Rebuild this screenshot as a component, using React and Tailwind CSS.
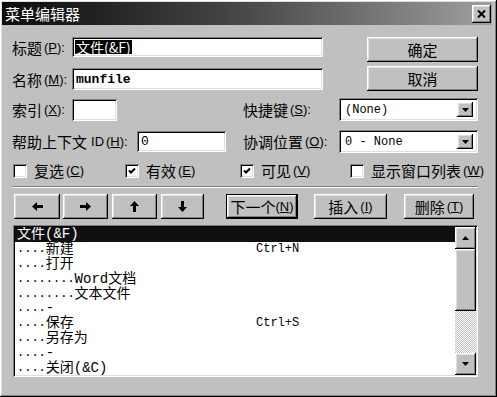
import React from 'react';

const raised = 'shadow-[inset_-1px_-1px_0_#000,inset_1px_1px_0_#fff,inset_-2px_-2px_0_#808080,inset_2px_2px_0_#dfdfdf]';
const sunken = 'shadow-[inset_1px_1px_0_#808080,inset_-1px_-1px_0_#fff,inset_2px_2px_0_#000,inset_-2px_-2px_0_#dfdfdf]';
const cjk = "font-['Noto_Sans_CJK_SC',sans-serif]";
const mono = "font-['Liberation_Mono','Noto_Sans_CJK_SC',monospace]";
const small = "text-[13px] font-['Liberation_Sans',sans-serif]";

const Lbl = ({ text, k, pre = '' }) => (
    <span className={`${cjk} text-[15px] leading-none text-black whitespace-nowrap flex items-center`}>
        {text}
        {pre && <span className={`${small} ml-[4px]`}>{pre}</span>}
        <span className={`${small} ml-[2px]`}>
            (<span className="underline">{k}</span>):
        </span>
    </span>
);

const Btn = ({ children, className = '' }) => (
    <div className={`bg-[#c0c0c0] ${raised} flex items-center justify-center ${cjk} text-[15px] leading-none text-black ${className}`}>
        {children}
    </div>
);

const Combo = ({ value }) => (
    <div className={`w-[139px] h-[23px] bg-white ${sunken} flex items-center pl-[6px] pr-[5px]`}>
        <span className={`flex-1 ${mono} text-[12px] leading-none`}>{value}</span>
        <div className={`w-[16px] h-[15px] bg-[#c0c0c0] ${raised} flex items-center justify-center`}>
            <svg width="7" height="4" viewBox="0 0 7 4"><path d="M0 0h7L3.5 4z" fill="#000" /></svg>
        </div>
    </div>
);

const Check = ({ checked, text, k, className = '' }) => (
    <div className={`flex items-center shrink-0 whitespace-nowrap ${className}`}>
        <div className={`w-[14px] h-[14px] shrink-0 bg-white ${sunken} flex items-center justify-center`}>
            {checked && (
                <svg width="8" height="8" viewBox="0 0 8 8">
                    <path d="M1 3.5l2 2 4-4" stroke="#000" strokeWidth="2" fill="none" />
                </svg>
            )}
        </div>
        <span className="ml-[7px] flex items-center whitespace-nowrap">
            <span className={`${cjk} text-[15px] leading-none`}>{text}</span>
            <span className={`${small} ml-[2px]`}>(<span className="underline">{k}</span>)</span>
        </span>
    </div>
);

const Arrow = ({ d, w, h }) => (
    <svg width={w} height={h} viewBox={`0 0 ${w} ${h}`}><path d={d} fill="#000" /></svg>
);

const items = [
    { dots: '', text: '文件(&F)', sel: true },
    { dots: '....', text: '新建', sc: 'Ctrl+N' },
    { dots: '....', text: '打开' },
    { dots: '........', text: 'Word文档' },
    { dots: '........', text: '文本文件' },
    { dots: '....', text: '-' },
    { dots: '....', text: '保存', sc: 'Ctrl+S' },
    { dots: '....', text: '另存为' },
    { dots: '....', text: '-' },
    { dots: '....', text: '关闭(&C)' },
];

const App = () => {
    return (
        <div className={`w-[497px] h-[397px] bg-[#c0c0c0] ${raised} overflow-hidden flex flex-col`}>
            {/* Title bar */}
            <div className="mx-[2px] mt-[2px] w-[490px] h-[23px] bg-gradient-to-r from-[#0c0c0c] via-[#4a4a4a] to-[#a0a0a0] flex items-center justify-between pl-[3px] pr-[1px]">
                <span className={`${cjk} text-[15px] leading-none text-white`}>菜单编辑器</span>
                <div className={`w-[19px] h-[18px] bg-[#c0c0c0] ${raised} flex items-center justify-center`}>
                    <svg width="9" height="8" viewBox="0 0 9 8">
                        <path d="M1 0.5l7 7M8 0.5l-7 7" stroke="#000" strokeWidth="2" />
                    </svg>
                </div>
            </div>

            <div className="pl-[12px] pr-[19px] flex flex-col">
                {/* Caption */}
                <div className="mt-[12px] flex items-start">
                    <div className="flex items-center h-[20px]">
                        <div className="w-[60px]"><Lbl text="标题" k="P" /></div>
                        <div className={`w-[251px] h-[20px] bg-white ${sunken} flex items-center pl-[3px]`}>
                            <span className={`${cjk} text-[14px] leading-[14px] bg-black text-white px-[1px]`}>文件(&amp;F)</span>
                        </div>
                    </div>
                    <Btn className="ml-[44px] w-[111px] h-[25px]">确定</Btn>
                </div>

                {/* Name */}
                <div className="mt-[4px] flex items-start">
                    <div className="flex items-center h-[22px] mt-[2px]">
                        <div className="w-[60px]"><Lbl text="名称" k="M" /></div>
                        <div className={`w-[251px] h-[22px] bg-white ${sunken} flex items-center pl-[4px]`}>
                            <span className={`${mono} text-[13px] leading-none font-bold`}>munfile</span>
                        </div>
                    </div>
                    <Btn className="ml-[44px] w-[111px] h-[25px]">取消</Btn>
                </div>

                {/* Index / Shortcut */}
                <div className="mt-[7px] flex items-center h-[23px]">
                    <div className="w-[60px]"><Lbl text="索引" k="X" /></div>
                    <div className={`w-[45px] h-[22px] bg-white ${sunken}`} />
                    <div className="ml-[126px] w-[96px]"><Lbl text="快捷键" k="S" /></div>
                    <Combo value="(None)" />
                </div>

                {/* Help context / Negotiate */}
                <div className="mt-[9px] flex items-center h-[23px]">
                    <div className="w-[125px]"><Lbl text="帮助上下文" pre="ID" k="H" /></div>
                    <div className={`w-[89px] h-[21px] bg-white ${sunken} flex items-center pl-[4px]`}>
                        <span className={`${mono} text-[13px] leading-none`}>0</span>
                    </div>
                    <div className="ml-[17px] w-[96px]"><Lbl text="协调位置" k="O" /></div>
                    <Combo value="0 - None" />
                </div>

                {/* Checkboxes */}
                <div className="mt-[10px] flex items-center h-[15px] pl-[1px]">
                    <Check text="复选" k="C" className="w-[112px]" />
                    <Check checked text="有效" k="E" className="w-[115px]" />
                    <Check checked text="可见" k="V" className="w-[110px]" />
                    <Check text="显示窗口列表" k="W" />
                </div>

                {/* Separator */}
                <div className="mt-[8px] h-[2px] border-t border-[#808080] border-b border-b-white" />

                {/* Buttons */}
                <div className="mt-[6px] flex items-center h-[25px] pl-[2px]">
                    <Btn className="w-[46px] h-[25px]"><Arrow w={11} h={9} d="M0 4.5L5 0v3h6v3H5v3z" /></Btn>
                    <Btn className="ml-[3px] w-[45px] h-[25px]"><Arrow w={11} h={9} d="M11 4.5L6 0v3H0v3h6v3z" /></Btn>
                    <Btn className="ml-[4px] w-[45px] h-[25px]"><Arrow w={9} h={11} d="M4.5 0L9 5H6v6H3V5H0z" /></Btn>
                    <Btn className="ml-[4px] w-[43px] h-[25px]"><Arrow w={9} h={11} d="M4.5 11L9 6H6V0H3v6H0z" /></Btn>
                    <div className="ml-[22px] border border-black">
                        <Btn className="w-[70px] h-[23px]">
                            下一个<span className={small}>(<span className="underline">N</span>)</span>
                        </Btn>
                    </div>
                    <Btn className="ml-[16px] w-[73px] h-[25px]">
                        插入<span className={`${small} ml-[2px]`}>(<span className="underline">I</span>)</span>
                    </Btn>
                    <Btn className="ml-[17px] w-[70px] h-[25px]">
                        删除<span className={`${small} ml-[2px]`}>(<span className="underline">T</span>)</span>
                    </Btn>
                </div>

                {/* Menu list */}
                <div className={`mt-[6px] ml-[1px] w-[465px] h-[152px] bg-white ${sunken} p-[2px] flex`}>
                    <div className="flex-1 flex flex-col overflow-hidden">
                        {items.map((it, i) => (
                            <div
                                key={i}
                                className={`h-[14.8px] flex items-center pl-[2px] ${it.sel ? 'bg-[#101010] text-white' : 'text-black'}`}
                            >
                                <div className="w-[239px] flex items-center whitespace-nowrap">
                                    <span className={`${mono} text-[12px] leading-none`}>{it.dots}</span>
                                    <span className={`${mono} text-[14px] leading-none`}>{it.text}</span>
                                </div>
                                {it.sc && <span className={`${mono} text-[12px] leading-none`}>{it.sc}</span>}
                            </div>
                        ))}
                    </div>
                    <div className="w-[21px] flex flex-col">
                        <div className={`h-[22px] bg-[#c0c0c0] ${raised} flex items-center justify-center`}>
                            <svg width="7" height="4" viewBox="0 0 7 4"><path d="M0 4h7L3.5 0z" fill="#000" /></svg>
                        </div>
                        <div className={`h-[62px] bg-[#c0c0c0] ${raised}`} />
                        <div className="flex-1 bg-[repeating-conic-gradient(#c0c0c0_0_25%,#fff_0_50%)] bg-[length:2px_2px]" />
                        <div className={`h-[22px] bg-[#c0c0c0] ${raised} flex items-center justify-center`}>
                            <svg width="7" height="4" viewBox="0 0 7 4"><path d="M0 0h7L3.5 4z" fill="#000" /></svg>
                        </div>
                    </div>
                </div>
            </div>
        </div>
    );
};

export default App;
